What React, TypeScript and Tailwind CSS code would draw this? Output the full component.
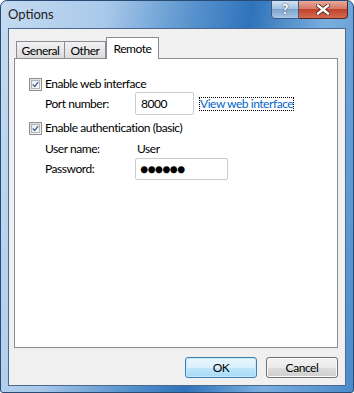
import React from "react";

const font = { fontFamily: 'Lato, "Noto Sans", sans-serif' };

function Check() {
  return (
    <span className="inline-flex h-[13px] w-[13px] shrink-0 items-center justify-center border border-[#8e8f8f] bg-[linear-gradient(135deg,#dcdcdc,#fafafa)] p-[1px]">
      <span className="flex h-full w-full items-center justify-center border border-[#b0b6bd] bg-[linear-gradient(135deg,#e8eaed,#fdfdfd)]">
        <svg width="9" height="9" viewBox="0 0 9 9">
          <path d="M1 4.5 L3.5 7 L8 1.5" stroke="#4a5f97" strokeWidth="1.8" fill="none" />
        </svg>
      </span>
    </span>
  );
}

export default function App() {
  return (
    <div
      className="relative h-[393px] w-[354px] overflow-hidden rounded-t-[7px] rounded-b-[3px] border border-[#294a72] bg-[linear-gradient(100deg,#c4dbf1_0%,#a9c9ea_25%,#5b95cf_45%,#2f73bb_60%,#7aaede_78%,#4b8bcb_100%)] text-[12px] tracking-[-0.45px] text-black"
      style={font}
    >
      {/* title bar */}
      <div className="flex h-[27px] items-center pl-[7px]">
        <span className="text-[13px] tracking-normal text-[#1e1e1e]">Options</span>
      </div>
      <div className="absolute right-[5px] top-[-1px] flex">
        <div className="flex h-[19px] w-[28px] items-center justify-center rounded-bl-[4px] border border-[#3a5a82] bg-[linear-gradient(#d3e2f2,#a6c2e0_45%,#7fa4cc_50%,#a9c6e6)] text-[13px] font-bold text-white [text-shadow:0_0_2px_#233b5e]">
          ?
        </div>
        <div className="flex h-[19px] w-[49px] items-center justify-center rounded-br-[4px] border border-l-0 border-[#5a2320] bg-[linear-gradient(#e9a99b,#d47868_45%,#c1432d_50%,#d46b50)]">
          <svg width="14" height="11" viewBox="0 0 14 11">
            <path d="M2 1.5 L12 9.5 M12 1.5 L2 9.5" stroke="#4a1a12" strokeWidth="4" strokeLinecap="square" />
            <path d="M2 1.5 L12 9.5 M12 1.5 L2 9.5" stroke="#ffffff" strokeWidth="2.4" strokeLinecap="square" />
          </svg>
        </div>
      </div>

      {/* client area */}
      <div className="mx-[7px] flex h-[358px] flex-col border border-[#4d6a8c] bg-[#f0f0f0] pl-[5px] pr-[7px] pt-[8px]">
        {/* tabs */}
        <div className="flex h-[21px] items-end pl-[2px]">
          <div className="flex h-[17px] w-[49px] items-center justify-center border border-b-0 border-[#898c95] bg-[linear-gradient(#f2f2f2,#dcdcdc)] pt-[1px]">General</div>
          <div className="flex h-[17px] w-[41px] items-center justify-center border border-b-0 border-l-0 border-[#898c95] bg-[linear-gradient(#f2f2f2,#dcdcdc)] pt-[1px]">Other</div>
          <div className="relative z-10 mb-[-1px] flex h-[22px] w-[53px] items-start justify-center border border-b-0 border-[#898c95] bg-white pt-[2px]">Remote</div>
        </div>
        {/* panel */}
        <div className="flex h-[290px] flex-col border border-[#898c95] bg-white pl-[14px] pt-[18px]">
          <div className="flex h-[14px] items-center gap-[3px]">
            <Check />
            <span>Enable web interface</span>
          </div>
          <div className="mt-[1px] flex h-[23px] items-center pl-[16px]">
            <span className="w-[90px]">Port number:</span>
            <div className="flex h-[23px] w-[59px] items-center rounded-[2px] border border-[#c9ced6] bg-white pl-[5px]">8000</div>
            <span className="ml-[5px] border border-dotted border-black leading-[12px] text-[#0066cc]">View web interface</span>
          </div>
          <div className="mt-[6px] flex h-[14px] items-center gap-[3px]">
            <Check />
            <span>Enable authentication (basic)</span>
          </div>
          <div className="mt-[5px] flex h-[17px] items-center pl-[16px]">
            <span className="w-[92px]">User name:</span>
            <span>User</span>
          </div>
          <div className="mt-[1px] flex h-[22px] items-center pl-[16px]">
            <span className="w-[90px]">Password:</span>
            <div className="flex h-[22px] w-[93px] items-center rounded-[2px] border border-[#c9ced6] bg-white pl-[4px] text-[14px] leading-none tracking-[-1px]">
              ●●●●●●
            </div>
          </div>
        </div>
        {/* buttons */}
        <div className="mt-[9px] flex justify-end gap-[9px]">
          <div className="flex h-[21px] w-[72px] items-center justify-center rounded-[3px] border border-[#3c7fb1] bg-[linear-gradient(#eaf6fd_0%,#d9f0fc_50%,#bee6fd_51%,#a7d9f5_100%)] shadow-[inset_0_0_0_1px_#c4e9fb]">OK</div>
          <div className="flex h-[21px] w-[72px] items-center justify-center rounded-[3px] border border-[#707070] bg-[linear-gradient(#f2f2f2_0%,#ebebeb_50%,#dddddd_51%,#cfcfcf_100%)] shadow-[inset_0_0_0_1px_#fbfbfb]">Cancel</div>
        </div>
      </div>
    </div>
  );
}
